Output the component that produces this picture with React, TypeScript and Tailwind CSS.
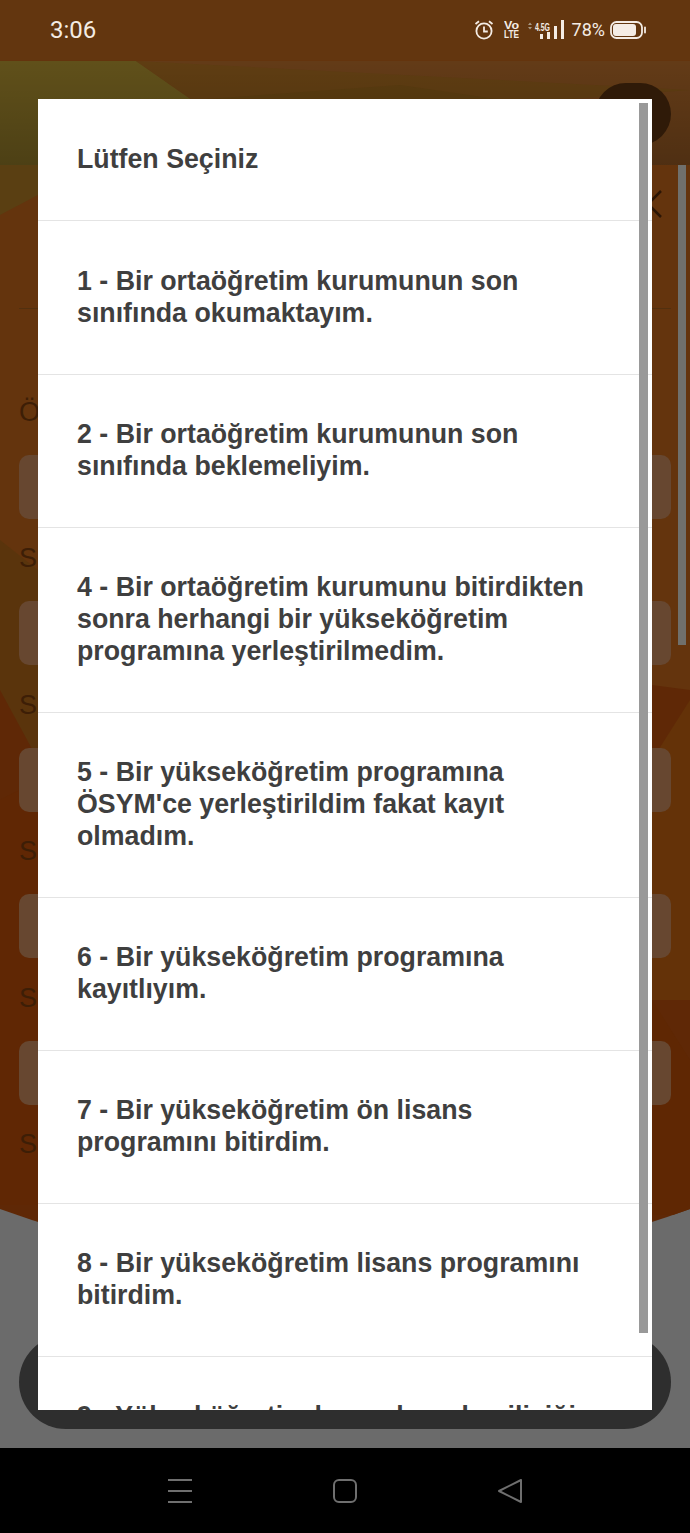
const items = [
  "1 - Bir ortaöğretim kurumunun son\nsınıfında okumaktayım.",
  "2 - Bir ortaöğretim kurumunun son\nsınıfında beklemeliyim.",
  "4 - Bir ortaöğretim kurumunu bitirdikten\nsonra herhangi bir yükseköğretim\nprogramına yerleştirilmedim.",
  "5 - Bir yükseköğretim programına\nÖSYM'ce yerleştirildim fakat kayıt\nolmadım.",
  "6 - Bir yükseköğretim programına\nkayıtlıyım.",
  "7 - Bir yükseköğretim ön lisans\nprogramını bitirdim.",
  "8 - Bir yükseköğretim lisans programını\nbitirdim.",
  "9 - Yükseköğretim kurumlarından ilişiğim\nkesildi.",
];
const labels = ["Ö", "S", "S", "S", "S", "S"];

function Wallpaper() {
  return (
    <svg className="absolute left-0 top-0" width="690" height="1388" viewBox="0 60 690 1388">
      <defs>
        <linearGradient id="hdr" x1="0" y1="0" x2="0" y2="1">
          <stop offset="0" stopColor="#000000" stopOpacity="0" />
          <stop offset="1" stopColor="#000000" stopOpacity="0.2" />
        </linearGradient>
        <clipPath id="wave">
          <path d="M0 60H690V1209Q345 1334 0 1209Z" />
        </clipPath>
      </defs>
      <g clipPath="url(#wave)">
        <rect x="0" y="60" width="690" height="1170" fill="#5f2806" />
        <polygon points="0,60 690,60 690,690 0,600" fill="#64340d" />
        <polygon points="0,165 130,165 38,195 0,215" fill="#5a3f12" />
        <polygon points="0,540 38,570 38,760 0,690" fill="#5a340c" />
        <polygon points="0,800 38,780 38,1205 0,1205" fill="#602704" />
        <polygon points="652,760 690,700 690,1000 652,1000" fill="#643208" />
        <polygon points="652,1000 690,1060 690,1215 652,1215" fill="#5f2703" />
        <rect x="0" y="61" width="690" height="104" fill="#633b17" />
        <polygon points="0,61 136,61 192,100 280,165 0,165" fill="#60501a" />
        <polygon points="136,61 690,90 560,100 600,165 280,165 192,100" fill="#5f3d12" />
        <polygon points="400,85 640,120 560,165 300,165 192,100" fill="#5a3c10" />
        <rect x="0" y="61" width="690" height="104" fill="url(#hdr)" />
      </g>
    </svg>
  );
}

function StatusIcons() {
  return (
    <div className="flex items-center text-[#f4ece4]">
      <svg width="20" height="20" viewBox="0 0 20 20" fill="none" stroke="currentColor" strokeWidth="1.8" className="mr-[10px]">
        <circle cx="10" cy="11" r="7.6" />
        <path d="M10 6.5v5h3.8M1.5 4L5 1.2M18.5 4L15 1.2" />
      </svg>
      <svg width="15" height="20" viewBox="0 0 15 20" fill="currentColor" className="mr-[9px]" fontFamily="Liberation Sans, sans-serif" fontWeight="700">
        <text x="0" y="8.5" fontSize="10.5" textLength="15" lengthAdjust="spacingAndGlyphs">Vo</text>
        <text x="0" y="18" fontSize="10" textLength="15" lengthAdjust="spacingAndGlyphs">LTE</text>
      </svg>
      <svg width="36" height="20" viewBox="0 0 36 20" fill="currentColor" className="mr-[8px]">
        <path d="M0 5l2-2.5 2 2.5zM0 7l2 2.5L4 7z" fill="#a89a85" />
        <rect x="12" y="14" width="3" height="5" />
        <rect x="19" y="12" width="3" height="7" />
        <rect x="26" y="6" width="3" height="13" />
        <rect x="33" y="0" width="3" height="19" />
        <text x="7" y="11" fontSize="10" fontWeight="700" fontFamily="Liberation Sans, sans-serif" textLength="15" lengthAdjust="spacingAndGlyphs">4.5G</text>
      </svg>
      <span className="mr-[5px] text-[18px] leading-[22px] font-['Roboto',sans-serif]">78%</span>
      <svg width="36" height="18" viewBox="0 0 36 18" fill="none">
        <rect x="1" y="1" width="31" height="16" rx="5.5" stroke="currentColor" strokeWidth="1.8" />
        <rect x="3" y="3" width="23" height="12" rx="3" fill="currentColor" />
        <path d="M35 6.5v5" stroke="currentColor" strokeWidth="1.8" strokeLinecap="round" />
      </svg>
    </div>
  );
}

function Underlay() {
  return (
    <div className="relative flex h-[1388px] shrink-0 flex-col overflow-hidden bg-[#6b6b6b]">
      <Wallpaper />
      <div className="absolute right-[19px] top-[23px] h-[62px] w-[76px] rounded-[34px] bg-[#2f1a08]" />
      <div className="absolute right-[4px] top-[105px] h-[480px] w-[8px] bg-[#70706c]" />
      <div className="relative flex flex-1 flex-col px-[19px] pb-[19px]">
        <div className="h-[105px] shrink-0" />
        <div className="relative h-[144px] shrink-0 border-b border-[#52300f]">
          <svg className="absolute right-[9px] top-[25px]" width="22" height="28" viewBox="0 0 22 28" fill="none" stroke="#2c1605" strokeWidth="2.5"><path d="M21 1L8 14l13 13" /></svg>
        </div>
        <div className="pt-[88px]">
          {labels.map((l, i) => (
            <div key={i} className="flex flex-col">
              <span className="text-[27px] leading-[30px] text-[#3d1e06]">{l}</span>
              {i < 5 && <div className="mb-[24.4px] mt-[28px] h-[64px] rounded-[10px] bg-[#674730]" />}
            </div>
          ))}
        </div>
        <div className="mt-auto h-[94px] rounded-full bg-[#2e2e2e]" />
      </div>
    </div>
  );
}

export default function App() {
  return (
    <div className="relative flex h-[1533px] w-[690px] flex-col overflow-hidden bg-black font-['Liberation_Sans',Arial,sans-serif]">
      <div className="flex h-[60px] shrink-0 items-center justify-between bg-[#63360f] pl-[50px] pr-[44px]">
        <span className="text-[24px] leading-none text-[#f4ece4] font-['Roboto',sans-serif]">3:06</span>
        <StatusIcons />
      </div>

      <Underlay />

      <div className="flex flex-1 items-center justify-center gap-[141px] bg-black">
        <svg width="24" height="24" viewBox="0 0 24 24" fill="none" stroke="#6f6f6f" strokeWidth="2"><path d="M0 1h24M0 12h24M0 23h24" /></svg>
        <svg width="24" height="24" viewBox="0 0 24 24" fill="none" stroke="#6f6f6f" strokeWidth="2"><rect x="1" y="1" width="22" height="22" rx="5" /></svg>
        <svg width="24" height="24" viewBox="0 0 24 24" fill="none" stroke="#6f6f6f" strokeWidth="2" strokeLinejoin="round"><path d="M23 1v22L1 12z" /></svg>
      </div>

      <div className="absolute left-[38px] top-[99px] h-[1311px] w-[614px] overflow-hidden bg-white text-[#3f3f3f]">
        <div className="border-b border-[#e4e4e4] pb-[45px] pl-[39px] pt-[44px] text-[26.75px] font-bold leading-[32px]">Lütfen Seçiniz</div>
        {items.map((t, i) => (
          <div key={t} className={i === 0 ? "whitespace-pre-line border-b border-[#e4e4e4] pb-[45px] pl-[39px] pt-[44px] text-[26.75px] font-bold leading-[32px]" : "whitespace-pre-line border-b border-[#e4e4e4] pb-[45px] pl-[39px] pt-[43px] text-[26.75px] font-bold leading-[32px]"}>{t}</div>
        ))}
        <div className="absolute right-[4px] top-[4px] h-[1230px] w-[9px] bg-[#999999]" />
      </div>
    </div>
  );
}
